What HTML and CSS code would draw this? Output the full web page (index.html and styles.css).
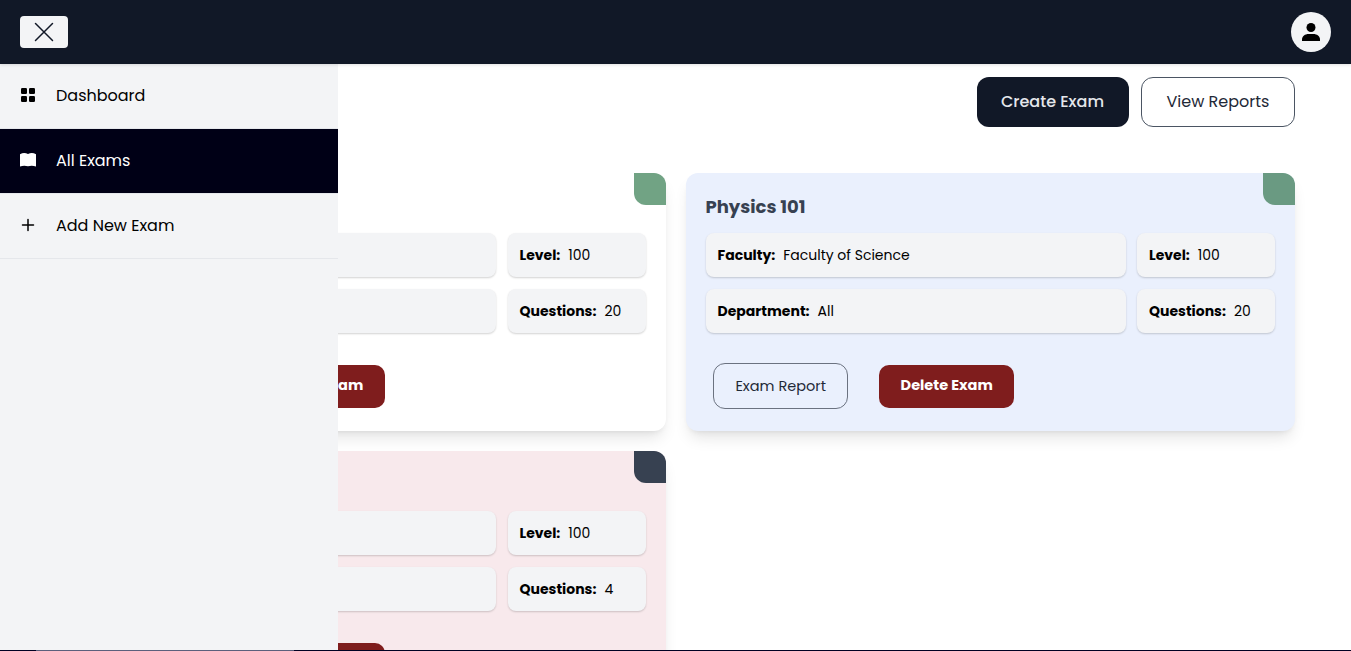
FILE: index.html
```html
<!DOCTYPE html>
<html lang="en">
<head>
<meta charset="utf-8">
<title>All Exams</title>
<link rel="stylesheet" href="styles.css">
</head>
<body>
<header class="topbar">
  <button class="close" aria-label="Close menu"><svg width="24" height="24" viewBox="0 0 24 24" fill="none" stroke="#111827" stroke-width="1.5" stroke-linecap="round"><path d="M3.500 3.500l17 17M20.500 3.500l-17 17"/></svg></button>
  <div class="avatar"><svg width="24" height="24" viewBox="0 0 24 24"><circle cx="12" cy="7.500" r="4.500"/><path d="M3 19.500c0-3.500 3.100-5.600 6.600-5.600h4.800c3.500 0 6.600 2.100 6.600 5.600v1.500H3z"/></svg></div>
</header>
<nav class="sidebar">
  <a class="item"><svg width="16" height="16" viewBox="0 0 16 16"><rect x="1" y="1" width="6" height="6" rx="1.200"/><rect x="9" y="1" width="6" height="6" rx="1.200"/><rect x="1" y="9" width="6" height="6" rx="1.200"/><rect x="9" y="9" width="6" height="6" rx="1.200"/></svg><span>Dashboard</span></a>
  <a class="item active"><svg width="16" height="16" viewBox="0 0 16 16"><path d="M0 2.200Q4 0 8 2Q12 0 16 2.200V14.500Q12 13 8 14.300Q4 13 0 14.500z"/></svg><span>All Exams</span></a>
  <a class="item"><svg width="16" height="16" viewBox="0 0 16 16" fill="none" stroke="#000" stroke-width="1.500" stroke-linecap="round"><path d="M8 2.500v11M2.500 8h11"/></svg><span>Add New Exam</span></a>
</nav>
<main class="content">
  <div class="actions">
    <button class="btn create"><span>Create Exam</span></button>
    <button class="btn view"><span>View Reports</span></button>
  </div>
  <section class="cards">
    <article class="card white">
      <i class="corner green"></i>
      <h2></h2>
      <div class="facts">
        <div class="fact"></div>
        <div class="fact"><b>Level:</b><span>100</span></div>
        <div class="fact"></div>
        <div class="fact"><b>Questions:</b><span>20</span></div>
      </div>
      <div class="card-actions"><button class="report"></button><button class="delete"><span>Delete Exam</span></button></div>
    </article>
    <article class="card blue">
      <i class="corner green"></i>
      <h2><span>Physics 101</span></h2>
      <div class="facts">
        <div class="fact"><b>Faculty:</b><span>Faculty of Science</span></div>
        <div class="fact"><b>Level:</b><span>100</span></div>
        <div class="fact"><b>Department:</b><span>All</span></div>
        <div class="fact"><b>Questions:</b><span>20</span></div>
      </div>
      <div class="card-actions"><button class="report"><span>Exam Report</span></button><button class="delete"><span>Delete Exam</span></button></div>
    </article>
    <article class="card pink">
      <i class="corner slate"></i>
      <h2></h2>
      <div class="facts">
        <div class="fact"></div>
        <div class="fact"><b>Level:</b><span>100</span></div>
        <div class="fact"></div>
        <div class="fact"><b>Questions:</b><span>4</span></div>
      </div>
      <div class="card-actions"><button class="report"></button><button class="delete"></button></div>
    </article>
  </section>
</main>
<div class="scrollbar"><div class="thumb"></div></div>
</body>
</html>
```
FILE: styles.css
```css
* { box-sizing: border-box; }
body {
  margin: 0;
  height: 651px;
  overflow: hidden;
  background: #fff;
  color: #000;
  font: 16px/24px Poppins, Inter, sans-serif;
}
button { font: inherit; padding: 0; border: 0; }
span, b { white-space: nowrap; }
.topbar {
  position: relative;
  z-index: 3;
  height: 64px;
  padding: 0 20px;
  display: flex;
  align-items: center;
  justify-content: space-between;
  background: #111827;
  box-shadow: 0 1px 3px rgba(0, 0, 0, .12);
}
.close {
  width: 48px;
  height: 32px;
  border-radius: 4px;
  background: #f3f4f6;
  display: grid;
  place-items: center;
}
.avatar {
  width: 40px;
  height: 40px;
  border-radius: 50%;
  background: #f3f4f6;
  display: grid;
  place-items: center;
}
.sidebar {
  position: absolute;
  z-index: 2;
  top: 64px;
  left: 0;
  bottom: 1px;
  width: 338px;
  background: #f3f4f6;
}
.item {
  height: 65px;
  padding: 0 20px 2px;
  display: flex;
  align-items: center;
  gap: 20px;
  border-bottom: 1px solid #e5e7eb;
}
.item span { padding-top: 2px; }
.item.active { background: #000016; color: #fff; fill: #fff; }
.content { height: 587px; overflow: hidden; padding: 13px 56px 0; }
.actions { display: flex; justify-content: flex-end; gap: 12px; }
.btn { height: 50px; border-radius: 12px; }
.create { width: 152px; padding-right: 1px; background: #111827; color: #e5e7eb; font-weight: 500; }
.view { width: 154px; background: #fff; color: #1f2937; border: 1px solid #4b5563; }
.cards {
  margin-top: 46px;
  display: grid;
  grid-template-columns: 1fr 1fr;
  grid-auto-rows: 258px;
  gap: 20px;
}
.card {
  position: relative;
  padding: 20px;
  border-radius: 12px;
  box-shadow: 0 10px 15px -3px rgba(0, 0, 0, .1), 0 4px 6px -4px rgba(0, 0, 0, .1);
}
.white { background: #fff; }
.blue { background: #eaf0fd; }
.pink { background: #f8e9ec; }
.corner {
  position: absolute;
  top: 0;
  right: 0;
  width: 32px;
  height: 32px;
  border-radius: 0 12px 0 12px;
}
.green { background: #71a384; }
.blue .green { background: #6a9a82; }
.slate { background: #374151; }
h2 { margin: 0; height: 40px; font-size: 18px; line-height: 28px; font-weight: 700; color: #374151; }
.facts {
  display: grid;
  grid-template-columns: 1fr 138px;
  grid-auto-rows: 44px;
  gap: 12px 11.5px;
  font-size: 14px;
}
.fact {
  padding: 0 12px;
  display: flex;
  align-items: center;
  gap: 8px;
  border-radius: 8px;
  background: #f3f4f6;
  box-shadow: 0 1px 2px rgba(0, 0, 0, .18);
}
.card-actions {
  margin: 30px 0 0 7.700px;
  display: flex;
  align-items: center;
  gap: 31px;
  font-size: 14.500px;
}
.report {
  width: 135px;
  height: 46px;
  border: 1px solid #6b7280;
  border-radius: 12px;
  background: transparent;
  color: #1f2937;
}
.delete {
  width: 135px;
  height: 43px;
  padding-bottom: 2px;
  border-radius: 10px;
  background: #7f1d1d;
  color: #fff;
  font-weight: 700;
}
.scrollbar {
  position: absolute;
  z-index: 4;
  left: 0;
  right: 0;
  bottom: 0;
  height: 1px;
  padding-left: 36px;
  background: #000022;
}
.thumb { width: 258px; height: 1px; background: #5b5f7c; }
```
